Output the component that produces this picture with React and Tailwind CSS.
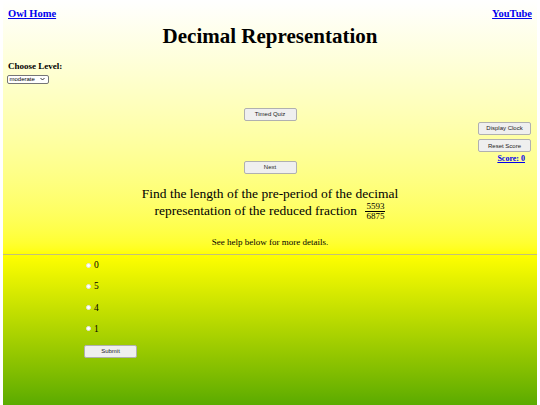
function Btn({ children, className = "" }) {
  return (
    <button
      className={
        "flex items-center justify-center w-[53px] h-[13px] bg-[#efefef] border border-[#b0b0b0] rounded-[2px] text-[6px] leading-none text-[#222] font-['Liberation_Sans',Arial,sans-serif] " +
        className
      }
    >
      {children}
    </button>
  );
}

function Radio({ label }) {
  return (
    <div className="flex items-center h-[10px]">
      <span className="inline-block w-[5px] h-[5px] rounded-full bg-white border border-[#e4e4e4]" />
      <span className="ml-[3px] text-[9.5px] leading-[10px] text-black">{label}</span>
    </div>
  );
}

export default function App() {
  return (
    <div className="w-[540px] h-[405px] bg-white px-[3px] overflow-hidden font-['Liberation_Serif','Times_New_Roman',serif] text-black">
      <div className="h-[254px] bg-gradient-to-b from-white to-[#ffff00] flex flex-col">
        <div className="flex justify-between pt-[8px] pl-[5px] pr-[5px]">
          <a className="text-[10.5px] leading-[11px] font-bold underline text-[#0000ee]">Owl Home</a>
          <a className="text-[10.5px] leading-[11px] font-bold underline text-[#0000ee]">YouTube</a>
        </div>
        <h1 className="mt-[5px] text-center text-[21px] leading-[24px] font-bold">Decimal Representation</h1>
        <div className="mt-[13px] pl-[5px] text-[9px] leading-[10px] font-bold">Choose Level:</div>
        <div className="mt-[3.5px] ml-[4px] w-[42px] h-[9px] bg-white border border-[#767676] rounded-[2px] flex items-center justify-between pl-[1.5px] pr-[3px]">
          <span className="text-[6px] leading-none font-['Liberation_Sans',Arial,sans-serif]">moderate</span>
          <svg width="5" height="4" viewBox="0 0 10 6">
            <path d="M1 1 L5 5 L9 1" fill="none" stroke="#222" strokeWidth="1.8" />
          </svg>
        </div>
        <div className="mt-[24px] grid grid-cols-[1fr_auto_1fr]">
          <div />
          <div className="flex flex-col">
            <Btn>Timed Quiz</Btn>
            <Btn className="mt-[40px] h-[12px]">Next</Btn>
          </div>
          <div className="flex flex-col items-end pt-[14px] pr-[6px]">
            <Btn className="h-[12px]">Display Clock</Btn>
            <Btn className="mt-[4.5px] h-[12px]">Reset Score</Btn>
            <a className="mt-[2px] mr-[6px] text-[8px] leading-[10px] font-bold underline text-[#0000ee]">Score: 0</a>
          </div>
        </div>
        <div className="mt-[11px] text-center text-[13.5px] leading-[17px]">
          Find the length of the pre-period of the decimal
          <br />
          representation of the reduced fraction{" "}
          <span className="inline-flex flex-col items-center align-middle ml-[5px] text-[9px] leading-[8.5px]">
            <span className="px-[1px]">5593</span>
            <span className="px-[1px] border-t border-black">6875</span>
          </span>
        </div>
        <div className="mt-[17px] text-center text-[9px] leading-[10px]">See help below for more details.</div>
      </div>
      <div className="h-[1px] bg-[#c2c07a]" />
      <div className="h-[150px] bg-gradient-to-b from-[#ffff00] to-[#5aab00] pt-[5px] pl-[83px]">
        <div className="flex flex-col gap-[11.3px]">
          <Radio label="0" />
          <Radio label="5" />
          <Radio label="4" />
          <Radio label="1" />
        </div>
        <Btn className="mt-[11px] -ml-[2px] w-[52px] h-[12px]">Submit</Btn>
      </div>
    </div>
  );
}
